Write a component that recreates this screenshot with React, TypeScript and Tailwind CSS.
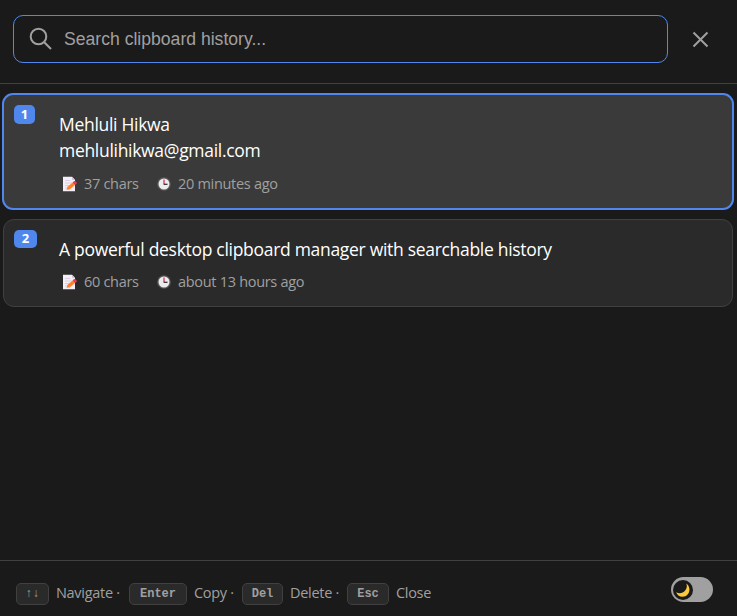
import type { ReactNode } from 'react';

function SearchIcon() {
  return (
    <svg width="24" height="24" viewBox="0 0 24 24" fill="none" stroke="#a0a0a0" strokeWidth="2" className="shrink-0">
      <circle cx="9.5" cy="9.5" r="7.8" />
      <path d="M15.2 15.2L22 22" />
    </svg>
  );
}

function MemoIcon() {
  return (
    <svg width="16" height="16" viewBox="0 0 16 16" className="shrink-0">
      <path d="M1 .8h9l3 3v11.4H1z" fill="#f3eef8" />
      <path d="M10 .8v3h3z" fill="#c9bdd6" />
      <path d="M3 4.5h5M3 7h7M3 9.5h4M3 12h3" stroke="#d2c9dc" strokeWidth=".8" />
      <path d="M4.5 13.8l1-3L11 6.2l2.2 2.6-5.6 4.6z" fill="#ff822d" />
      <path d="M10.7 6.4l1.5-1.2c.9-.5 3.1 1.5 2.3 2.5l-1.4 1.2z" fill="#f8312f" />
      <path d="M12 5.3c1-.6 3.1 1.4 2.4 2.4l-.7.6-2.3-2.6z" fill="#f0386b" />
    </svg>
  );
}

function ClockIcon() {
  return (
    <svg width="14" height="14" viewBox="0 0 14 14" className="shrink-0">
      <circle cx="7" cy="7" r="6.8" fill="#5c5760" />
      <circle cx="7" cy="7" r="5.5" fill="#ececec" />
      <path d="M7 2.5v4.8" stroke="#d9345f" strokeWidth="1.3" />
      <path d="M6.7 7.3h3.8" stroke="#38323d" strokeWidth="1.3" />
    </svg>
  );
}

function Meta({ chars, charsClass, time, timeClass }: { chars: string; charsClass: string; time: string; timeClass: string }) {
  return (
    <div className="flex h-5 items-center text-[14.5px] leading-5 text-[#a0a0a0]">
      <span className="ml-[3px] flex w-[77px] items-center">
        <MemoIcon />
        <span className={`ml-[6px] ${charsClass}`}>{chars}</span>
      </span>
      <span className="ml-[18px] flex items-center">
        <ClockIcon />
        <span className={`ml-[7px] ${timeClass}`}>{time}</span>
      </span>
    </div>
  );
}

function Key({ children, className }: { children: ReactNode; className: string }) {
  return (
    <kbd
      className={`mt-px flex h-[22px] shrink-0 items-center justify-center rounded-[5px] border border-[#404040] bg-[#2a2a2a] font-['Liberation_Mono',monospace] text-[12px] font-bold text-[#a0a0a0] ${className}`}
    >
      {children}
    </kbd>
  );
}

export default function App() {
  return (
    <div className="flex h-[616px] w-[737px] flex-col overflow-hidden bg-[#1a1a1a] font-['Open_Sans','Noto_Sans',sans-serif] text-white">
      <header className="flex h-[84px] shrink-0 items-start border-b border-[#404040] pt-[15px] pl-[13px]">
        <div className="flex h-12 w-[655px] items-center rounded-[10px] border border-[#5087ed] pl-[15px]">
          <SearchIcon />
          <span className="ml-[11px] font-['Liberation_Sans',Arial,sans-serif] text-[17.6px] whitespace-nowrap text-[#a0a0a0]">
            Search clipboard history...
          </span>
        </div>
        <button className="mt-[16px] ml-[24px]" aria-label="Close">
          <svg width="17" height="17" viewBox="0 0 17 17" fill="none" stroke="#a0a0a0" strokeWidth="2">
            <path d="M1.5 1.5l14 14M15.5 1.5l-14 14" />
          </svg>
        </button>
      </header>

      <main className="flex flex-1 flex-col gap-[9px] pt-[9px]">
        <article className="ml-[2px] flex h-[117px] w-[732px] items-start rounded-[11px] border-[2.5px] border-[#5087ed] bg-[#3a3a3a]">
          <span className="mt-[10px] ml-[10px] flex h-[19px] w-[21px] items-center justify-center rounded-[5px] bg-[#5087ed] text-[13px] font-bold">1</span>
          <div className="ml-[24px] pt-[16px] whitespace-nowrap">
            <p className="text-[17.5px] leading-[26px] tracking-[-0.3px]">Mehluli Hikwa</p>
            <p className="text-[17.5px] leading-[26px] tracking-[-0.3px]">mehlulihikwa@gmail.com</p>
            <div className="mt-[11px]">
              <Meta chars="37 chars" charsClass="tracking-[-0.3px]" time="20 minutes ago" timeClass="tracking-[-0.3px]" />
            </div>
          </div>
        </article>

        <article className="ml-[3px] flex h-[88px] w-[730px] items-start rounded-[11px] border border-[#404040] bg-[#2a2a2a]">
          <span className="mt-[10px] ml-[10px] flex h-[18px] w-[23px] items-center justify-center rounded-[5px] bg-[#5087ed] text-[13px] font-bold">2</span>
          <div className="ml-[22px] pt-[16px] whitespace-nowrap">
            <p className="text-[17.5px] leading-[26px] tracking-[-0.3px]">A powerful desktop clipboard manager with searchable history</p>
            <div className="mt-[10px]">
              <Meta chars="60 chars" charsClass="tracking-[-0.3px]" time="about 13 hours ago" timeClass="tracking-[-0.3px]" />
            </div>
          </div>
        </article>
      </main>

      <footer className="flex h-[56px] shrink-0 items-start justify-between border-t border-[#404040] pr-[24px] pl-[16px]">
        <div className="flex pt-[21px] text-[14.5px] leading-[22px] tracking-[-0.3px] whitespace-nowrap text-[#a0a0a0]">
          <Key className="w-[33px] font-normal tracking-normal">↑↓</Key>
          <span className="ml-[7px] w-[73px]">Navigate ·</span>
          <Key className="w-[58px] tracking-normal">Enter</Key>
          <span className="ml-[7px] w-[48px]">Copy ·</span>
          <Key className="w-[41px] tracking-normal">Del</Key>
          <span className="ml-[7px] w-[57px]">Delete ·</span>
          <Key className="w-[42px] tracking-normal">Esc</Key>
          <span className="ml-[7px]">Close</span>
        </div>
        <button className="mt-[16px] flex h-[25px] w-[42px] items-center rounded-full bg-[#a0a0a0] pl-[2px]" aria-label="Toggle theme">
          <span className="flex size-5 items-center justify-center rounded-full bg-[#1a1a1a]">
            <svg width="16" height="16" viewBox="0 0 16 16">
              <path d="M11.3 1.4C17 5.5 14.5 14.6 7.5 14.8 4.2 14.8 2 13 1.2 10.3c3.2 1.6 6.7 1 8.8-1.5 2-2.3 2.2-5 1.3-7.4z" fill="#fcc93a" />
            </svg>
          </span>
        </button>
      </footer>
    </div>
  );
}
